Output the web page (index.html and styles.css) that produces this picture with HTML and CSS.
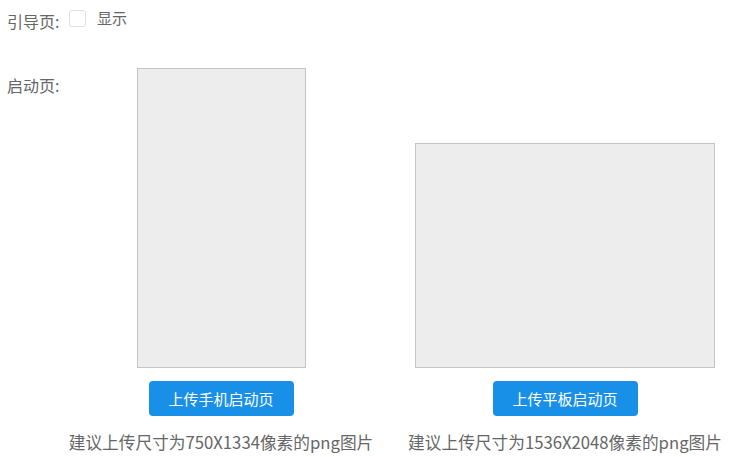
FILE: index.html
```html
<!DOCTYPE html>
<html lang="zh-CN">
<head>
<meta charset="utf-8">
<title>启动页设置</title>
<link rel="stylesheet" href="styles.css">
</head>
<body>
<div class="page">
  <div class="row row-guide">
    <div class="label">引导页:</div>
    <label class="check">
      <span class="check-box"></span>
      <span class="check-text">显示</span>
    </label>
  </div>
  <div class="row row-launch">
    <div class="label label-launch">启动页:</div>
    <div class="col">
      <div class="preview preview-phone"></div>
      <button class="btn">上传手机启动页</button>
      <div class="hint">建议上传尺寸为750X1334像素的png图片</div>
    </div>
    <div class="col">
      <div class="preview preview-pad"></div>
      <button class="btn">上传平板启动页</button>
      <div class="hint">建议上传尺寸为1536X2048像素的png图片</div>
    </div>
  </div>
</div>
</body>
</html>
```

FILE: styles.css
```css
* { box-sizing: border-box; }
html, body {
  margin: 0;
  padding: 0;
  background: #fff;
}
body {
  font-family: "Noto Sans CJK SC", "Noto Sans", sans-serif;
  color: #666;
}
.page {
  padding-left: 7px;
}
.row {
  display: flex;
}
.row-guide {
  height: 68px;
  align-items: flex-start;
}
.label {
  width: 54px;
  flex-shrink: 0;
  font-size: 16px;
  line-height: 24px;
  white-space: nowrap;
}
.row-guide .label {
  margin-top: 9px;
  width: 62px;
}
.check {
  display: flex;
  align-items: flex-start;
}
.check-box {
  width: 17px;
  height: 17px;
  margin-top: 10px;
  border: 1px solid #dcdfe6;
  border-radius: 3px;
  background: #fff;
}
.check-text {
  margin-left: 11px;
  margin-top: 7px;
  font-size: 15px;
  line-height: 22px;
}
.row-launch {
  align-items: flex-end;
}
.label-launch {
  align-self: flex-start;
  margin-top: 5px;
}
.col {
  width: 320px;
  flex-shrink: 0;
  display: flex;
  flex-direction: column;
  align-items: center;
}
.col + .col {
  margin-left: 24px;
}
.preview {
  border: 1px solid #c4c4c4;
  background: #ededed;
}
.preview-phone {
  width: 169px;
  height: 300px;
}
.preview-pad {
  width: 300px;
  height: 225px;
}
.btn {
  margin-top: 13px;
  width: 145px;
  height: 35px;
  border: none;
  border-radius: 4px;
  background: #1890e8;
  color: #fff;
  font-family: "Noto Sans CJK SC", "Noto Sans", sans-serif;
  font-size: 15px;
  padding: 0;
}
.hint {
  margin-top: 14px;
  font-size: 16.7px;
  line-height: 24px;
  white-space: nowrap;
}
```
